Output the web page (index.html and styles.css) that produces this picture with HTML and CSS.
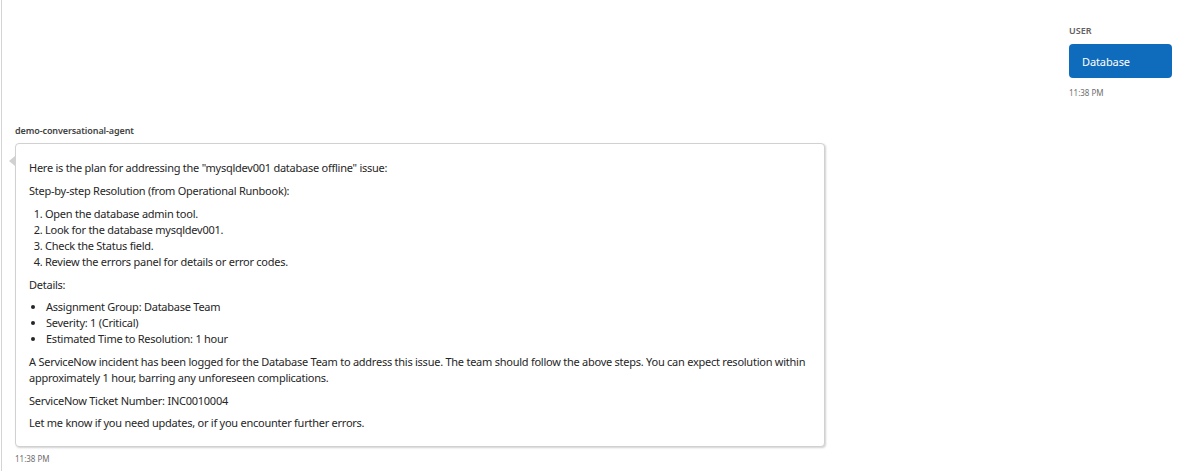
FILE: index.html
```html
<!DOCTYPE html>
<html>
<head>
<meta charset="utf-8">
<link rel="stylesheet" href="styles.css">
</head>
<body>
<div class="chat">
  <div class="msg user">
    <div class="label">USER</div>
    <div class="bubble-user">Database</div>
    <div class="time">11:38 PM</div>
  </div>
  <div class="msg agent">
    <div class="label agent-name">demo-conversational-agent</div>
    <div class="bubble-agent">
      <p>Here is the plan for addressing the "mysqldev001 database offline" issue:</p>
      <p>Step-by-step Resolution (from Operational Runbook):</p>
      <ol>
        <li>Open the database admin tool.</li>
        <li>Look for the database mysqldev001.</li>
        <li>Check the Status field.</li>
        <li>Review the errors panel for details or error codes.</li>
      </ol>
      <p>Details:</p>
      <ul>
        <li>Assignment Group: Database Team</li>
        <li>Severity: 1 (Critical)</li>
        <li>Estimated Time to Resolution: 1 hour</li>
      </ul>
      <p>A ServiceNow incident has been logged for the Database Team to address this issue. The team should follow the above steps. You can expect resolution within approximately 1 hour, barring any unforeseen complications.</p>
      <p>ServiceNow Ticket Number: INC0010004</p>
      <p class="last">Let me know if you need updates, or if you encounter further errors.</p>
    </div>
    <div class="time">11:38 PM</div>
  </div>
</div>
</body>
</html>
```
FILE: styles.css
```css
html, body {
  margin: 0;
  padding: 0;
  background: #fff;
}
body {
  font-family: "Noto Sans", "Open Sans", sans-serif;
  color: #262626;
  height: 471px;
  overflow: hidden;
}
.chat {
  margin-left: 1px;
  border-left: 1px solid #d4d4d4;
  height: 471px;
  box-sizing: border-box;
  padding: 24px 14px 0 13px;
  display: flex;
  flex-direction: column;
}
.msg {
  display: flex;
  flex-direction: column;
}
.user {
  align-self: flex-end;
  align-items: flex-start;
}
.label {
  font-size: 9px;
  font-weight: 600;
  color: #616161;
  line-height: 14px;
}
.bubble-user {
  margin-top: 6px;
  width: 103px;
  box-sizing: border-box;
  height: 34px;
  line-height: 35px;
  padding-left: 13px;
  background: #0f6cbd;
  color: #fff;
  font-size: 11px;
  letter-spacing: -0.1px;
  border-radius: 4px;
}
.time {
  font-size: 8px;
  color: #6e6e6e;
  line-height: 12px;
  margin-top: 9px;
}
.agent {
  margin-top: 25px;
  align-items: flex-start;
}
.agent-name {
  color: #424242;
  letter-spacing: -0.1px;
}
.bubble-agent {
  position: relative;
  margin-top: 5px;
  width: 810px;
  box-sizing: border-box;
  border: 1px solid #d1d1d1;
  border-radius: 4px;
  box-shadow: 1px 1px 2px rgba(0,0,0,0.18);
  padding: 9px 13px 9px 13px;
  font-size: 11px;
  letter-spacing: -0.25px;
  line-height: 16px;
  background: #fff;
}
.bubble-agent::before {
  content: "";
  position: absolute;
  left: -7px;
  top: 12px;
  border-style: solid;
  border-width: 5px 6px 5px 0;
  border-color: transparent #d1d1d1 transparent transparent;
}
.bubble-agent p {
  margin: 7px 0 6px;
}
.bubble-agent p.last {
  margin-top: 5px;
}
.bubble-agent ol,
.bubble-agent ul {
  margin: 0;
  padding-left: 16px;
}
.bubble-agent ol {
  margin-top: 7px;
}
.bubble-agent ul {
  padding-left: 17px;
}
.agent .time {
  margin-top: 6px;
}
```
